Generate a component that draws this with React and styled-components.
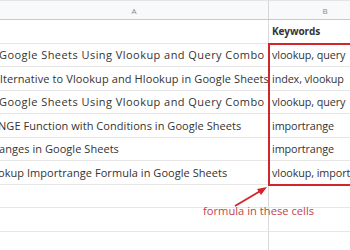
import React from "react";
import styled, { createGlobalStyle } from "styled-components";

const GlobalStyle = createGlobalStyle`
  body {
    margin: 0;
    background: #ffffff;
    overflow: hidden;
  }
`;

const Sheet = styled.div`
  position: relative;
  width: 350px;
  height: 250px;
  overflow: hidden;
  background: #ffffff;
  font-family: "Open Sans", "DejaVu Sans", sans-serif;
  color: #333333;
`;

const HeaderRow = styled.div`
  display: flex;
  height: 20px;
  box-sizing: border-box;
  background: #f8f9fa;
  border-top: 1px solid #e4e4e4;
  border-bottom: 1px solid #c9c9c9;
`;

const HeaderCell = styled.div`
  flex: none;
  width: ${(p) => p.$width}px;
  display: flex;
  align-items: center;
  justify-content: center;
  font-size: 8px;
  color: #8a8a8a;
  box-sizing: border-box;
  border-right: ${(p) => (p.$divider ? "1px solid #d6d6d6" : "none")};
`;

const Row = styled.div`
  display: flex;
  height: 23.5px;
  box-sizing: border-box;
  border-bottom: 1px solid #e6e6e6;
`;

const TitleCell = styled.div`
  flex: none;
  width: 269px;
  box-sizing: border-box;
  border-right: 1px solid #dadada;
  overflow: hidden;
  white-space: nowrap;
  display: flex;
  align-items: center;
  font-size: 11px;
  letter-spacing: ${(p) => p.$spacing || 0}px;
  text-indent: ${(p) => p.$shift || 0}px;
`;

const KeywordCell = styled.div`
  flex: none;
  width: 112px;
  padding-left: 3px;
  overflow: hidden;
  white-space: nowrap;
  display: flex;
  align-items: center;
  font-size: ${(p) => (p.$bold ? 10 : 10.8)}px;
  font-weight: ${(p) => (p.$bold ? 700 : 400)};
  letter-spacing: -0.1px;
`;

const Highlight = styled.div`
  position: absolute;
  left: 268px;
  top: 43px;
  width: 120px;
  height: 143px;
  box-sizing: border-box;
  border: 2px solid #d2262d;
`;

const Note = styled.div`
  position: absolute;
  left: 203px;
  top: 203px;
  font-size: 11.2px;
  color: #c8424a;
  white-space: nowrap;
`;

const Arrow = styled.svg`
  position: absolute;
  left: 228px;
  top: 182px;
`;

const rows = [
  { title: "Google Sheets Using Vlookup and Query Combo", kw: "vlookup, query", shift: -1, spacing: 0.45 },
  { title: "lternative to Vlookup and Hlookup in Google Sheets", kw: "index, vlookup", shift: 0, spacing: 0.1 },
  { title: "Google Sheets Using Vlookup and Query Combo", kw: "vlookup, query", shift: -1, spacing: 0.45 },
  { title: "NGE Function with Conditions in Google Sheets", kw: "importrange", shift: -2, spacing: 0.05 },
  { title: "anges in Google Sheets", kw: "importrange", shift: -1, spacing: 0.05 },
  { title: "okup Importrange Formula in Google Sheets", kw: "vlookup, importrange", shift: -2, spacing: 0.05 },
];

export default function App() {
  return (
    <>
      <GlobalStyle />
      <Sheet>
        <HeaderRow>
          <HeaderCell $width={269} $divider>A</HeaderCell>
          <HeaderCell $width={112}>B</HeaderCell>
        </HeaderRow>
        <Row>
          <TitleCell />
          <KeywordCell $bold>Keywords</KeywordCell>
        </Row>
        {rows.map((r, i) => (
          <Row key={i}>
            <TitleCell $shift={r.shift} $spacing={r.spacing}>{r.title}</TitleCell>
            <KeywordCell>{r.kw}</KeywordCell>
          </Row>
        ))}
        {[0, 1, 2].map((i) => (
          <Row key={"e" + i}>
            <TitleCell />
            <KeywordCell />
          </Row>
        ))}
        <Highlight />
        <Arrow width="44" height="30" viewBox="0 0 44 30">
          <line x1="7" y1="24" x2="34" y2="8" stroke="#d2262d" strokeWidth="2" />
          <polygon points="39,5 29,7 33,13" fill="#d2262d" />
        </Arrow>
        <Note>formula in these cells</Note>
      </Sheet>
    </>
  );
}
